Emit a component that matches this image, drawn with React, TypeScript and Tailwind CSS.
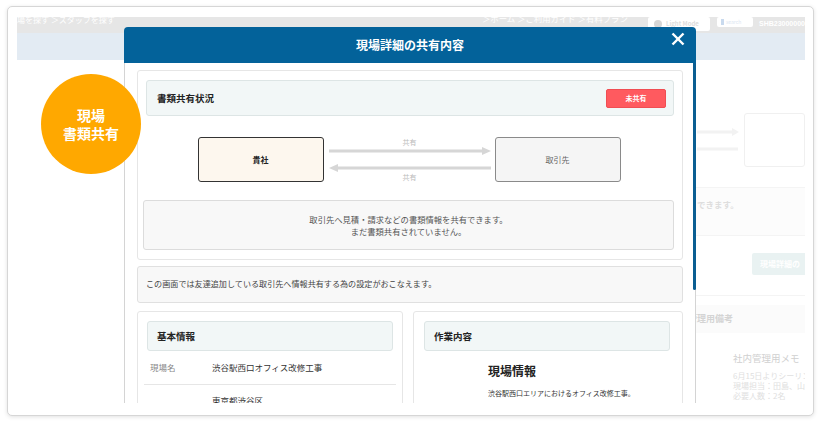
import React from 'react';

function ArrowRight() {
  return (
    <svg width="162" height="8" viewBox="0 0 162 8">
      <line x1="0" y1="4" x2="154" y2="4" stroke="#d6d6d6" strokeWidth="3" />
      <polygon points="153,0 162,4 153,8" fill="#d6d6d6" />
    </svg>
  );
}

function ArrowLeft() {
  return (
    <svg width="162" height="8" viewBox="0 0 162 8">
      <line x1="8" y1="4" x2="162" y2="4" stroke="#d6d6d6" strokeWidth="3" />
      <polygon points="9,0 0,4 9,8" fill="#d6d6d6" />
    </svg>
  );
}

export default function App() {
  return (
    <div className="w-[822px] h-[424px] bg-white pt-[6px] pl-[7px] font-['Noto_Sans_CJK_JP','Noto_Sans',sans-serif]">
      <div className="w-[807px] h-[410px] rounded-[5px] border border-[#d6d6d6] shadow-[0_1px_4px_rgba(0,0,0,0.12)] bg-white pt-[10px] pb-[12px] px-[9px]">
        <div className="relative w-[788px] h-[386px] overflow-hidden bg-white">
          {/* faded page behind the modal */}
          <div className="flex h-[16px] bg-[#e6e6e6] text-white text-[8px] leading-[10px] whitespace-nowrap">
            <span className="shrink-0 -ml-[8px] w-[473px] -mt-[2px]">現場を探す ＞スタッフを探す</span>
            <span className="shrink-0 w-[166px] -mt-[4px] text-[8.4px]">＞ホーム ＞ご利用ガイド ＞有料プラン</span>
            <span className="shrink-0 w-[62px] h-[14px] bg-white rounded-[2px] flex items-center gap-[4px] pl-[6px] text-[6px] font-bold text-[#ddd]">
              <span className="w-[8px] h-[8px] rounded-full bg-[#d6d6d6]" />Light Mode
            </span>
            <span className="shrink-0 ml-[7px] w-[36px] h-[10px] bg-white rounded-[2px] flex items-center gap-[2px] pl-[4px] text-[5px] text-[#dbe6f2]">
              <span className="w-[3px] h-[6px] bg-[#c9daee]" />search
            </span>
            <span className="shrink-0 ml-[6px] mt-[2px] text-[7px] font-bold font-['Liberation_Sans',sans-serif]">SHB23000000</span>
          </div>
          <div className="h-[27px] bg-[#e3ebf3]" />
          <div className="flex">
            <div className="flex-1" />
            <div className="w-[117px] shrink-0 flex flex-col">
              <div className="mt-[53px] h-[54px] flex">
                <svg width="56" height="54" viewBox="0 0 56 54">
                  <line x1="9" y1="19" x2="44" y2="19" stroke="#f2f2f2" strokeWidth="3" />
                  <polygon points="44,15 51,19 44,23" fill="#f2f2f2" />
                  <line x1="9" y1="36" x2="50" y2="36" stroke="#f2f2f2" strokeWidth="3" />
                </svg>
                <div className="flex-1 border border-[#f0f0f0] rounded-[3px]" />
              </div>
              <div className="mt-[20px] h-[49px] bg-[#fcfcfc] border-y border-[#f4f4f4] pl-[9px] pt-[11px] text-[8.5px] font-bold text-[#dedede] font-['Liberation_Serif','Noto_Sans_CJK_JP',serif]">
                できます。
              </div>
              <div className="mt-[9px] h-[51px] pt-[8px] pl-[64px] border-b border-[#f4f4f4]">
                <div className="w-[60px] h-[22px] bg-[#e9f2f2] rounded-[2px] flex items-center pl-[8px] text-[8px] font-bold text-white whitespace-nowrap">
                  現場詳細の
                </div>
              </div>
              <div className="mt-[9px] h-[28px] bg-[#fbfbfb] flex items-center text-[9px] font-bold text-[#d4d4d4] whitespace-nowrap">
                管理用備考
              </div>
              <div className="mt-[19px] pl-[45px] text-[9.5px] text-[#d0d0d0] whitespace-nowrap leading-[12px]">社内管理用メモ</div>
              <div className="mt-[7px] pl-[45px] text-[8px] text-[#e0e0e0] whitespace-nowrap leading-[10px]">
                <div>6月15日よりシーリング</div>
                <div>現場担当：田島、山本</div>
                <div>必要人数：2名</div>
              </div>
            </div>
          </div>

          {/* badge */}
          <div className="absolute left-[24px] top-[57px] z-10 w-[100px] h-[100px] rounded-full bg-[#ffa800] flex flex-col items-center justify-center text-white text-[14px] font-bold leading-[18px]">
            <span>現場</span>
            <span>書類共有</span>
          </div>

          {/* modal */}
          <div className="absolute left-[107px] top-[10px] bottom-0 w-[572px] flex flex-col">
            <div className="relative h-[36px] shrink-0 bg-[#03629a] rounded-t-[4px] flex items-center justify-center text-white text-[12px] font-bold">
              現場詳細の共有内容
              <svg className="absolute right-[11px] top-[5px]" width="14" height="14" viewBox="0 0 14 14">
                <line x1="1.5" y1="1.5" x2="12.5" y2="12.5" stroke="white" strokeWidth="2.4" />
                <line x1="12.5" y1="1.5" x2="1.5" y2="12.5" stroke="white" strokeWidth="2.4" />
              </svg>
            </div>
            <div className="relative flex-1 bg-white border-x border-[#d4d4d4] px-[12px] pt-[7px]">
              <div className="absolute -right-[1px] top-0 w-[3px] h-[227px] bg-[#0b5e92] rounded-b-[2px]" />

              {/* 書類共有状況 */}
              <div className="border border-[#e6e6e6] rounded-[3px] pt-[9px] px-[8px] pb-[9px]">
                <div className="h-[36px] bg-[#f2f7f7] border border-[#dde5e5] rounded-[3px] flex items-center justify-between pl-[10px] pr-[7px]">
                  <span className="text-[9.5px] font-bold text-[#222]">書類共有状況</span>
                  <span className="w-[60px] h-[19px] bg-[#ff5a5f] border border-[#f04e53] rounded-[2px] flex items-center justify-center text-white text-[7px] font-bold">未共有</span>
                </div>
                <div className="mt-[21px] h-[45px] flex justify-center -ml-[2px]">
                  <div className="w-[126px] h-[45px] bg-[#fdf7ee] border border-[#333] rounded-[3px] flex items-center justify-center text-[8px] font-bold text-[#222]">貴社</div>
                  <div className="ml-[5px] mr-[4px] w-[162px] flex flex-col text-[7px] text-[#bbb]">
                    <div className="h-[10px] leading-[10px] text-center">共有</div>
                    <ArrowRight />
                    <div className="h-[9px]" />
                    <ArrowLeft />
                    <div className="h-[10px] leading-[10px] text-center">共有</div>
                  </div>
                  <div className="w-[126px] h-[45px] bg-[#f5f5f5] border border-[#8a8a8a] rounded-[3px] flex items-center justify-center text-[8px] text-[#666]">取引先</div>
                </div>
                <div className="mt-[18px] -ml-[3px] h-[50px] bg-[#f8f8f8] border border-[#dcdcdc] rounded-[3px] flex flex-col items-center justify-center text-[8.3px] leading-[12px] text-[#555]">
                  <span>取引先へ見積・請求などの書類情報を共有できます。</span>
                  <span>まだ書類共有されていません。</span>
                </div>
              </div>

              <div className="mt-[6px] h-[37px] bg-[#f8f8f8] border border-[#e0e0e0] rounded-[3px] pl-[8px] flex items-center text-[8.1px] text-[#444]">
                この画面では友達追加している取引先へ情報共有する為の設定がおこなえます。
              </div>

              <div className="mt-[8px] flex gap-[10px]">
                <div className="w-[266px] h-[120px] border border-[#e6e6e6] rounded-[3px] pt-[9px] px-[9px]">
                  <div className="h-[30px] bg-[#f2f7f7] border border-[#dde5e5] rounded-[3px] pl-[9px] flex items-center text-[9.5px] font-bold text-[#222]">基本情報</div>
                  <div className="-mx-[3px]">
                    <div className="h-[34px] flex items-center border-b border-[#e6e6e6] text-[8.5px]">
                      <span className="pl-[6px] w-[68px] text-[#888]">現場名</span>
                      <span className="text-[#333]">渋谷駅西口オフィス改修工事</span>
                    </div>
                    <div className="pt-[9px] flex text-[8.5px] leading-[12px]">
                      <span className="pl-[6px] w-[68px] text-[#888]"></span>
                      <span className="text-[#333]">東京都渋谷区</span>
                    </div>
                  </div>
                </div>
                <div className="flex-1 h-[120px] border border-[#e6e6e6] rounded-[3px] pt-[9px] pl-[10px] pr-[12px]">
                  <div className="h-[30px] bg-[#f2f7f7] border border-[#dde5e5] rounded-[3px] pl-[9px] flex items-center text-[9.5px] font-bold text-[#222]">作業内容</div>
                  <div className="pl-[64px]">
                    <div className="mt-[12px] text-[12px] leading-[16px] font-bold text-[#222]">現場情報</div>
                    <div className="mt-[9px] text-[7px] leading-[10px] text-[#333] whitespace-nowrap">渋谷駅西口エリアにおけるオフィス改修工事。</div>
                  </div>
                </div>
              </div>
            </div>
          </div>
        </div>
      </div>
    </div>
  );
}
